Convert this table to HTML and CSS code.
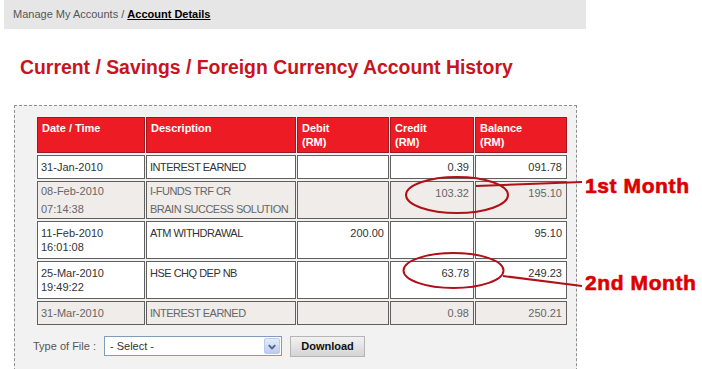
FILE: index.html
```html
<!DOCTYPE html>
<html>
<head>
<meta charset="utf-8">
<link rel="stylesheet" href="styles.css">
</head>
<body>
<div class="page">
  <div class="crumbs">Manage My Accounts / <a class="crumb-current">Account Details</a></div>
  <h1 class="title">Current / Savings / Foreign Currency Account History</h1>
  <div class="panel">
    <table class="history">
      <thead>
        <tr>
          <th class="c-date">Date / Time</th>
          <th class="c-desc">Description</th>
          <th class="c-debit">Debit<br>(RM)</th>
          <th class="c-credit">Credit<br>(RM)</th>
          <th class="c-bal">Balance<br>(RM)</th>
        </tr>
      </thead>
      <tbody>
        <tr class="one">
          <td>31-Jan-2010</td>
          <td class="desc">INTEREST EARNED</td>
          <td class="num"></td>
          <td class="num">0.39</td>
          <td class="num">091.78</td>
        </tr>
        <tr class="alt wide">
          <td>08-Feb-2010<br>07:14:38</td>
          <td class="desc">I-FUNDS TRF CR<br>BRAIN SUCCESS SOLUTION</td>
          <td class="num"></td>
          <td class="num">103.32</td>
          <td class="num">195.10</td>
        </tr>
        <tr class="two">
          <td>11-Feb-2010<br>16:01:08</td>
          <td class="desc">ATM WITHDRAWAL</td>
          <td class="num">200.00</td>
          <td class="num"></td>
          <td class="num">95.10</td>
        </tr>
        <tr class="two">
          <td>25-Mar-2010<br>19:49:22</td>
          <td class="desc">HSE CHQ DEP NB</td>
          <td class="num"></td>
          <td class="num">63.78</td>
          <td class="num">249.23</td>
        </tr>
        <tr class="alt one">
          <td>31-Mar-2010</td>
          <td class="desc">INTEREST EARNED</td>
          <td class="num"></td>
          <td class="num">0.98</td>
          <td class="num">250.21</td>
        </tr>
      </tbody>
    </table>
    <div class="filerow">
      <span class="file-label">Type of File :</span>
      <div class="select">
        <span class="select-text">- Select -</span>
        <span class="select-btn">
          <svg width="15" height="15" viewBox="0 0 15 15"><path d="M4 6 L7.5 9.5 L11 6" fill="none" stroke="#4d6185" stroke-width="2"/></svg>
        </span>
      </div>
      <button class="dl-btn">Download</button>
    </div>
  </div>
  <svg class="annot" width="702" height="369" viewBox="0 0 702 369">
    <g fill="none" stroke="#b01018" stroke-width="2">
      <ellipse cx="457" cy="195" rx="51" ry="18"/>
      <path d="M476 186 L582 182"/>
      <ellipse cx="453.5" cy="270.5" rx="50" ry="17.5"/>
      <path d="M503 276 L582 286"/>
    </g>
    <text x="585" y="193" class="annot-text">1st Month</text>
    <text x="585" y="290" class="annot-text">2nd Month</text>
  </svg>
</div>
</body>
</html>
```
FILE: styles.css
```css
html, body {
  margin: 0;
  padding: 0;
  background: #ffffff;
}
body {
  font-family: "Liberation Sans", Arial, sans-serif;
  font-size: 11px;
  color: #333333;
}
.page {
  position: relative;
  width: 702px;
  height: 369px;
  overflow: hidden;
}
.crumbs {
  margin-left: 4px;
  width: 573px;
  height: 29px;
  padding-left: 9px;
  line-height: 28px;
  background: #e6e6e6;
  color: #555555;
  font-size: 11px;
}
.crumb-current {
  color: #000000;
  font-weight: bold;
  text-decoration: underline;
}
.title {
  margin: 26px 0 0 20px;
  font-size: 19.4px;
  line-height: 24px;
  font-weight: bold;
  color: #c8141e;
}
.panel {
  margin: 26px 0 0 14px;
  width: 540px;
  height: 270px;
  padding: 9px 0 0 21px;
  border: 1px dashed #8f8f8f;
  background: #f2f2f2;
}
.history {
  border-collapse: separate;
  border-spacing: 1px 2px;
  table-layout: fixed;
  width: 532px;
}
.history th,
.history td {
  box-sizing: border-box;
  vertical-align: top;
  text-align: left;
  line-height: 14px;
  font-size: 11px;
  white-space: nowrap;
  overflow: hidden;
}
.history th {
  background: #ed1c24;
  border: 1px solid #9c1a1f;
  color: #ffffff;
  font-weight: bold;
  padding: 3px 4px 3px 4px;
  height: 35px;
}
.c-date { width: 108px; }
.c-desc { width: 150px; }
.c-debit { width: 92px; }
.c-credit { width: 84px; }
.c-bal { width: 92px; }
.history td {
  background: #ffffff;
  border: 1px solid #5f5f5f;
  padding: 4px 4px 3px 3px;
  color: #333333;
}
.history td.desc {
  letter-spacing: -0.5px;
}
.history td.num {
  text-align: right;
  padding-right: 4px;
}
.history tr.one td {
  height: 24px;
}
.history tr.two td {
  height: 38px;
}
.history tr.alt td {
  background: #efecea;
  color: #666666;
}
.history tr.wide td {
  padding-top: 0;
  padding-bottom: 0;
  line-height: 18px;
  height: 38px;
}
.history tr.wide td.num {
  padding-top: 4px;
  line-height: 14px;
}
.filerow {
  display: flex;
  align-items: center;
  margin-top: 8px;
  margin-left: -3px;
  height: 22px;
}
.file-label {
  color: #555555;
  width: 71px;
}
.select {
  box-sizing: border-box;
  display: flex;
  align-items: center;
  justify-content: space-between;
  width: 178px;
  height: 20px;
  border: 1px solid #7f9db9;
  background: #ffffff;
  padding: 0 1px 0 5px;
  color: #333333;
}
.select-btn {
  box-sizing: border-box;
  width: 16px;
  height: 16px;
  display: flex;
  align-items: center;
  justify-content: center;
  border: 1px solid #b9c9ef;
  border-radius: 2px;
  background: linear-gradient(#e4ecfd, #bccbf0);
}
.dl-btn {
  box-sizing: border-box;
  margin-left: 8px;
  width: 75px;
  height: 21px;
  padding: 0;
  border: 1px solid #b5b5b5;
  background: linear-gradient(#f2f2f2, #d4d4d4);
  font-family: "Liberation Sans", Arial, sans-serif;
  font-size: 11px;
  font-weight: bold;
  color: #111111;
}
.annot {
  position: absolute;
  left: 0;
  top: 0;
  pointer-events: none;
}
.annot-text {
  font-family: "Liberation Sans", Arial, sans-serif;
  font-size: 21px;
  font-weight: bold;
  letter-spacing: 0.6px;
  fill: #dc0000;
  stroke: #dc0000;
  stroke-width: 0.6px;
}
```
